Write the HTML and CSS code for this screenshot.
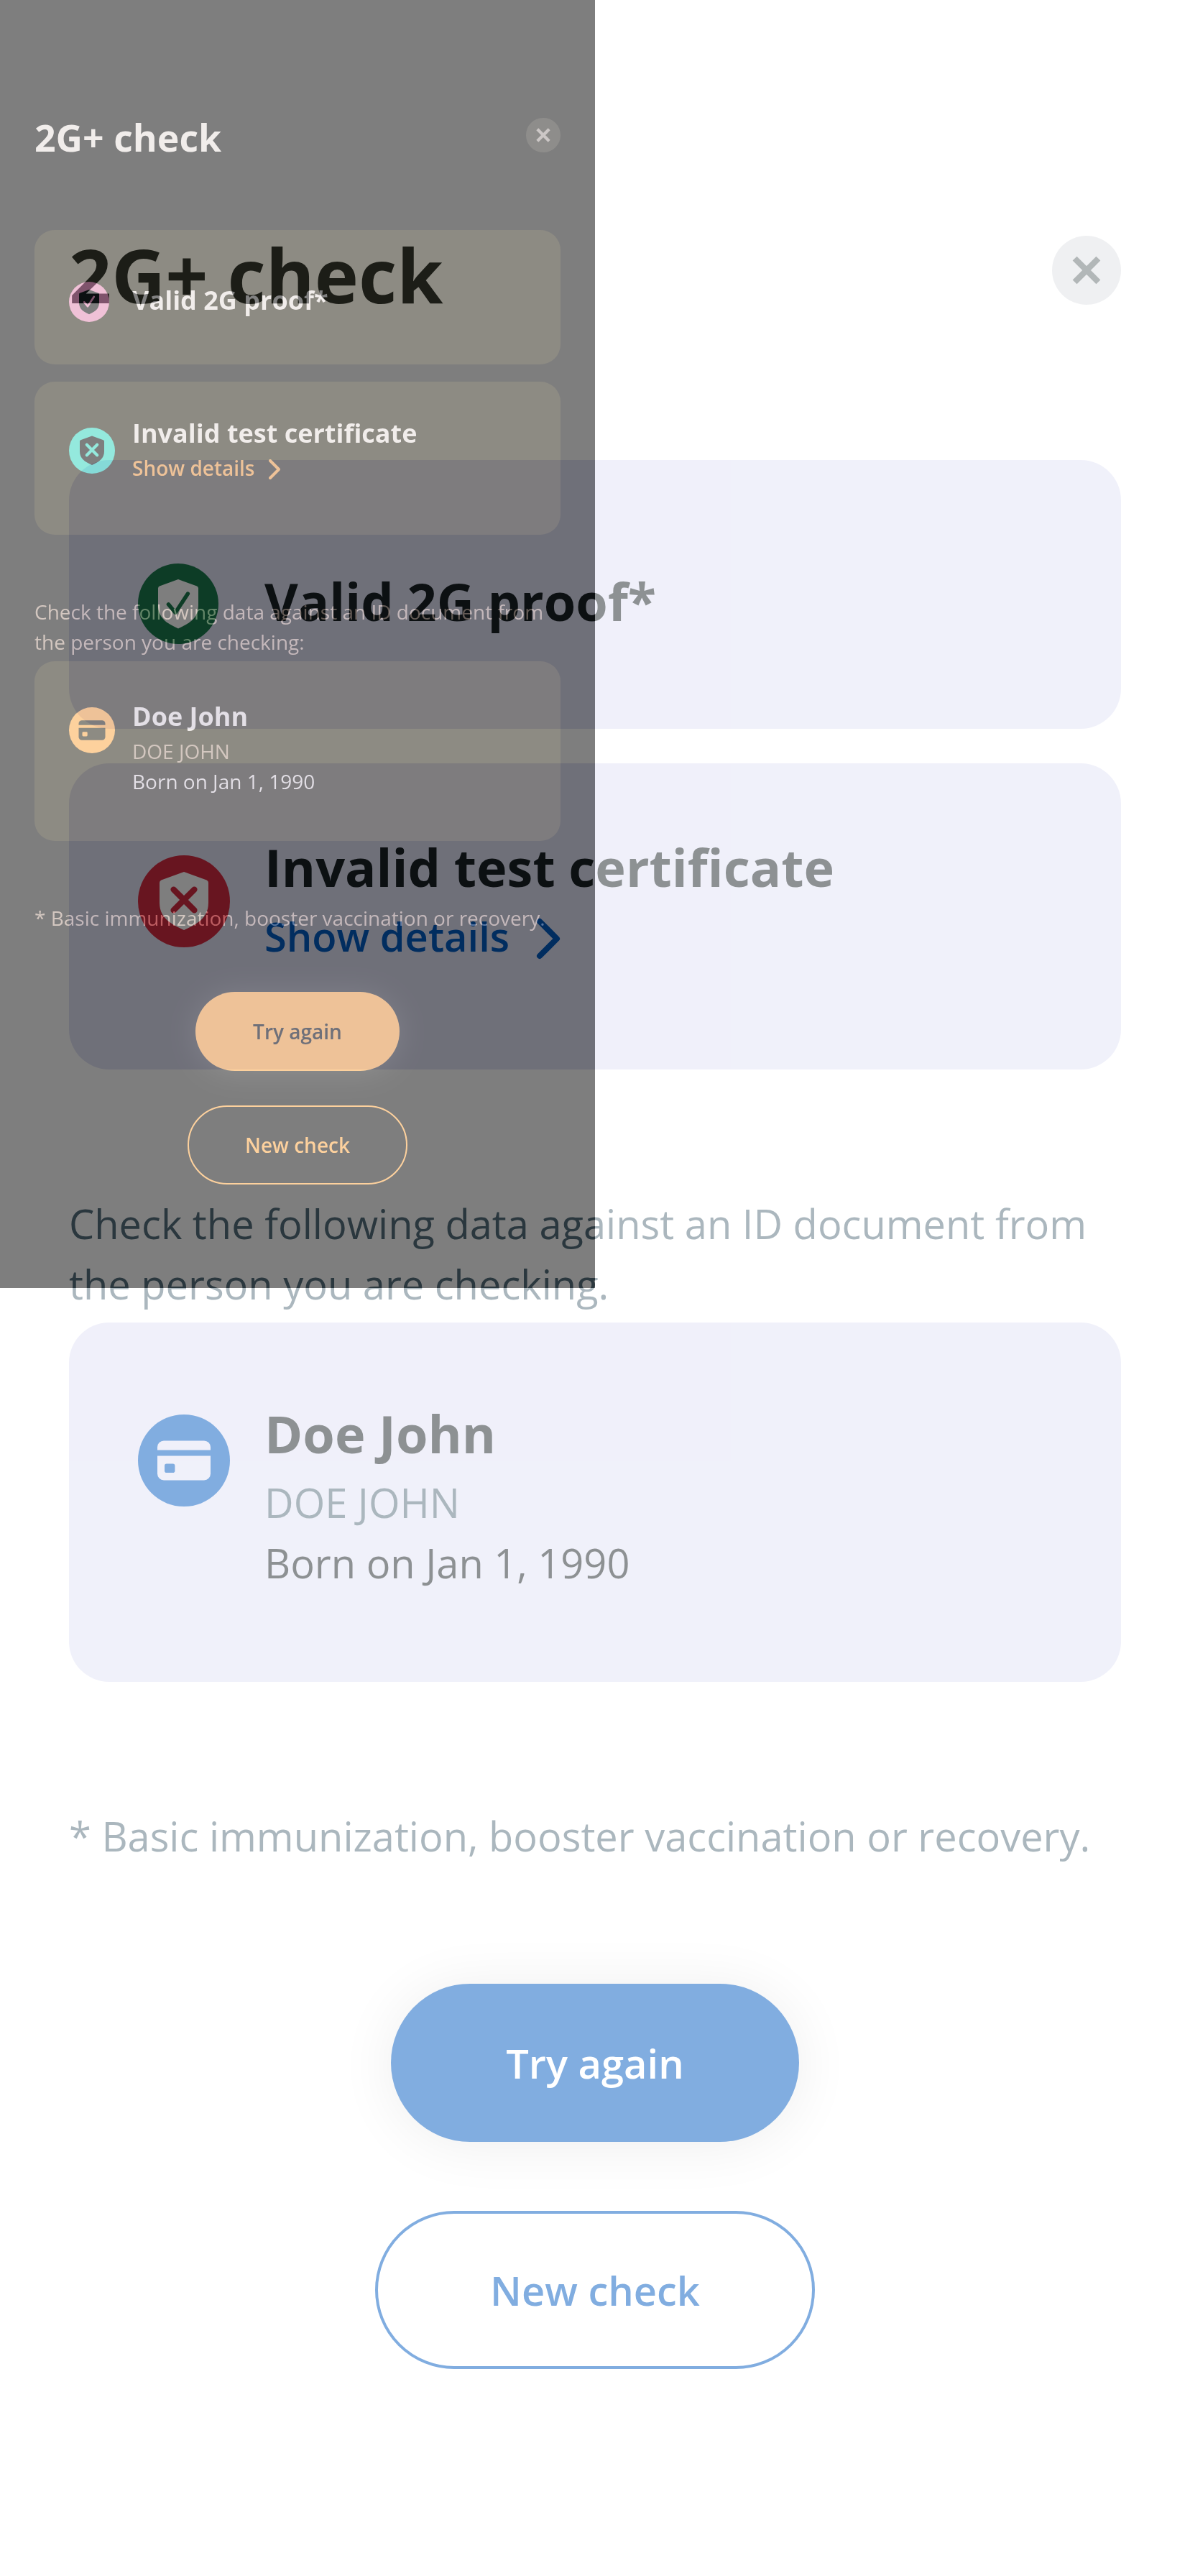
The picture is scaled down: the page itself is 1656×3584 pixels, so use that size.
FILE: index.html
```html
<!DOCTYPE html>
<html lang="en">
<head>
<meta charset="utf-8">
<title>2G+ check</title>
<link rel="stylesheet" href="styles.css">
</head>
<body>
<svg class="sprite" aria-hidden="true">
  <symbol id="close" viewBox="0 0 48 48">
    <circle cx="24" cy="24" r="24" fill="#dfe1e5"/>
    <path d="M15.800 15.800 32.200 32.200M32.200 15.800 15.800 32.200" stroke="#656f71" stroke-width="4.200" fill="none"/>
  </symbol>
  <symbol id="valid" viewBox="0 0 56 56">
    <circle cx="28" cy="28" r="28" fill="#1c7a4e"/>
    <path fill="#fff" d="M28 11 41 15.700Q42 16.100 42 17.200V29C42 37.500 36.500 41.500 28 45.200C19.500 41.500 14 37.500 14 29V17.200Q14 16.100 15 15.700Z"/>
    <path d="M21.200 28.400 26 34.200 34.700 21" stroke="#1c7a4e" stroke-width="2.700" fill="none" stroke-linecap="round" stroke-linejoin="round"/>
  </symbol>
  <symbol id="invalid" viewBox="0 0 64 64">
    <circle cx="32" cy="32" r="32" fill="#d32b42"/>
    <path fill="#fff" d="M32 11.500 47.800 17.200Q49 17.700 49 19V33C49 43 42 47.500 32 52C22 47.500 15 43 15 33V19Q15 17.700 16.200 17.200Z"/>
    <path d="M24.800 23.800 39.200 38.200M39.200 23.800 24.800 38.200" stroke="#d32b42" stroke-width="4.200" fill="none" stroke-linecap="round"/>
  </symbol>
  <symbol id="idcard" viewBox="0 0 64 64">
    <circle cx="32" cy="32" r="32" fill="#035bc1"/>
    <path class="cutout" d="M18 18.200H46A4.500 4.500 0 0 1 50.500 22.700V24.800H13.500V22.700A4.500 4.500 0 0 1 18 18.200Z"/>
    <path class="cutout" d="M13.500 28.700H50.500V41.200A4.500 4.500 0 0 1 46 45.700H18A4.500 4.500 0 0 1 13.500 41.200Z"/>
    <rect x="18.500" y="34.300" width="7.200" height="6.200" rx="1.400" fill="#035bc1"/>
  </symbol>
  <symbol id="chevron" viewBox="0 0 20 30">
    <path d="M4 3 16 15 4 27" stroke="#035bc1" stroke-width="4" fill="none" stroke-linecap="round" stroke-linejoin="round"/>
  </symbol>
</svg>

<main class="screen screen-large">
  <header class="header">
    <h1 class="title">2G+ check</h1>
    <svg class="close"><use href="#close"/></svg>
  </header>
  <section class="card card-valid">
    <div class="icon-slot"><svg class="icon-valid"><use href="#valid"/></svg></div>
    <h2 class="card-title">Valid 2G proof*</h2>
  </section>
  <section class="card card-invalid">
    <div class="icon-slot"><svg class="icon"><use href="#invalid"/></svg></div>
    <div>
      <h2 class="card-title">Invalid test certificate</h2>
      <a class="details">Show details <svg class="chevron"><use href="#chevron"/></svg></a>
    </div>
  </section>
  <p class="hint">Check the following data against an ID document from<br>the person you are checking.</p>
  <section class="card card-person">
    <div class="icon-slot"><svg class="icon"><use href="#idcard"/></svg></div>
    <div>
      <h2 class="card-title">Doe John</h2>
      <p class="person-code">DOE JOHN</p>
      <p class="person-born">Born on Jan 1, 1990</p>
    </div>
  </section>
  <p class="footnote">* Basic immunization, booster vaccination or recovery.</p>
  <div class="actions">
    <button class="button button-primary">Try again</button>
    <button class="button button-outline">New check</button>
  </div>
</main>

<div class="overlay">
  <main class="screen screen-inverted">
    <header class="header">
      <h1 class="title">2G+ check</h1>
      <svg class="close"><use href="#close"/></svg>
    </header>
    <section class="card card-valid">
      <div class="icon-slot"><svg class="icon-valid"><use href="#valid"/></svg></div>
      <h2 class="card-title">Valid 2G proof*</h2>
    </section>
    <section class="card card-invalid">
      <div class="icon-slot"><svg class="icon"><use href="#invalid"/></svg></div>
      <div>
        <h2 class="card-title">Invalid test certificate</h2>
        <a class="details">Show details <svg class="chevron"><use href="#chevron"/></svg></a>
      </div>
    </section>
    <p class="hint">Check the following data against an ID document from<br>the person you are checking:</p>
    <section class="card card-person">
      <div class="icon-slot"><svg class="icon"><use href="#idcard"/></svg></div>
      <div>
        <h2 class="card-title">Doe John</h2>
        <p class="person-code">DOE JOHN</p>
        <p class="person-born">Born on Jan 1, 1990</p>
      </div>
    </section>
    <p class="footnote">* Basic immunization, booster vaccination or recovery.</p>
    <div class="actions">
      <button class="button button-primary">Try again</button>
      <button class="button button-outline">New check</button>
    </div>
  </main>
</div>
</body>
</html>
```
FILE: styles.css
```css
* { box-sizing: border-box; }

body {
  position: relative;
  width: 1656px;
  height: 3584px;
  margin: 0;
  overflow: hidden;
  background: #fff;
  font-family: "Open Sans", "Noto Sans", sans-serif;
}

h1, h2, p { margin: 0; }

.sprite { display: none; }
.cutout { fill: var(--card); }

.screen {
  --card: #e1e2f5;
  display: flex;
  flex-direction: column;
  width: 828px;
  height: 1792px;
  padding: 156px 48px 0;
  background: #fff;
  color: #1a2226;
  font-size: 28px;
  line-height: 42px;
  white-space: nowrap;
}

.screen-large { zoom: 2; }
.screen-inverted {
  --card: #e1e6f6;
  filter: invert(1);
}

/* Half-transparent layer that covers the whole page */
.overlay {
  position: absolute;
  inset: 0;
  background: #fff;
  opacity: .5;
}

.header {
  display: flex;
  justify-content: space-between;
  align-items: flex-start;
  height: 70px;
  margin-bottom: 94px;
}

.title {
  font-size: 51.8px;
  line-height: 70px;
  font-weight: 700;
}

.close {
  width: 48px;
  height: 48px;
  margin-top: 8px;
}

.card {
  display: flex;
  align-items: flex-start;
  gap: 24px;
  padding: 0 48px;
  border-radius: 28px;
  background: var(--card);
}

.icon-slot { display: flex; flex: none; width: 64px; }
.icon { width: 64px; height: 64px; }
.icon-valid { width: 56px; height: 56px; }

.card-valid {
  height: 187px;
  padding-top: 72px;
  margin-bottom: 24px;
}
.card-valid .card-title { margin-top: 1px; }

.card-invalid {
  height: 213px;
  padding-top: 47px;
  margin-bottom: 86px;
}
.card-invalid .icon-slot { padding-top: 17px; }

.card-person {
  height: 250px;
  padding-top: 52px;
  margin: 6px 0 86px;
}
.card-person .icon-slot { padding-top: 12px; }

.card-title {
  margin-bottom: 2px;
  font-size: 36px;
  line-height: 50px;
  font-weight: 700;
}

.details {
  display: flex;
  align-items: center;
  gap: 17px;
  color: #035bc1;
  font-weight: 600;
}
.chevron { width: 20px; height: 30px; margin-top: 4px; }

.hint, .footnote, .person-code { color: #566f7d; }

.actions {
  display: flex;
  flex-direction: column;
  align-items: center;
  gap: 48px;
  margin-top: 82px;
}

.button {
  height: 110px;
  padding: 0;
  border: 0;
  border-radius: 55px;
  font: 600 28px/42px "Open Sans", "Noto Sans", sans-serif;
}
.button-primary {
  width: 284px;
  background: #035bc1;
  box-shadow: 0 2px 40px rgba(0, 0, 0, .14);
  color: #fff;
}
.button-outline {
  width: 306px;
  border: 2px solid #035bc1;
  background: transparent;
  color: #035bc1;
}
```
